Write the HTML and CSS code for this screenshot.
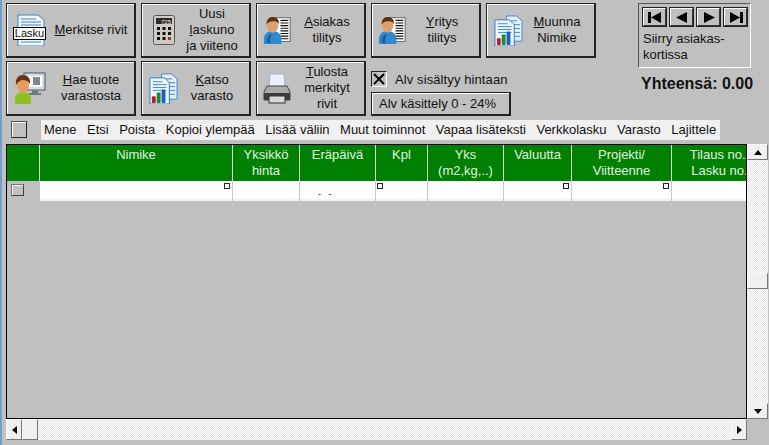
FILE: index.html
```html
<!DOCTYPE html>
<html lang="en">

<head>
    <meta charset="UTF-8">
    <meta name="viewport" content="width=device-width, initial-scale=1.0">
    <title>Lasku</title>
    <link rel="stylesheet" href="styles.css">
</head>

<body>
    <svg class="defs" width="0" height="0">
        <symbol id="sheets" viewBox="0 0 32 32">
            <path d="M14 1h10l6 5v21H14z" fill="#e4f1fc" stroke="#3f86cc"/>
            <path d="M18 6h7M18 10h10M18 14h10M18 18h10M22 22h6" stroke="#3f86cc"/>
            <path d="M2 5h15l5 5v22H2z" fill="#eef6fd" stroke="#2f78c4"/>
            <path d="M5 9h10M5 12h14M5 15h14M5 18h14" stroke="#3f86cc"/>
            <rect x="4" y="24" width="4" height="7" rx="1" fill="#c01c26"/>
            <rect x="9" y="20" width="4" height="11" rx="1" fill="#1f8a30"/>
            <rect x="14" y="17" width="4" height="14" rx="1" fill="#1f5fb0"/>
        </symbol>
        <symbol id="person-doc" viewBox="0 0 32 32">
            <rect x="12" y="2" width="19" height="27" fill="#fff" stroke="#555"/>
            <path d="M20 5h9M20 8h9M20 11h9M20 14h9M20 17h9M20 20h9M20 23h9M20 26h9" stroke="#111" stroke-width="1.200"/>
            <path d="M1 32v-6c0-6 5-9 10-9s10 3 10 9v6z" fill="#2f8ad0"/>
            <path d="M5 31c-2-5 1-10 6-11-3 3-3 7-2 11z" fill="#1c5f9c"/>
            <ellipse cx="11" cy="11" rx="6.500" ry="8" fill="#e0a06c"/>
            <path d="M4 10c0-6 3-9 7-9s8 3 7 8c-2-3-4-3-7-3s-5 1-7 4z" fill="#5c3014"/>
        </symbol>
    </svg>

    <div class="top">
        <div class="btn-grid">
            <button class="btn btn-wide">
                <span class="doc-icon">
                    <svg width="30" height="32" viewBox="0 0 30 32">
                        <path d="M1 1h20l6 5v26H1z" fill="#eef6fd" stroke="#3f86cc"/>
                        <path d="M4 5h15M4 8h20M4 11h20M4 28h20" stroke="#3f86cc"/>
                    </svg>
                    <span class="doc-label">Lasku</span>
                </span>
                <span class="btn-text"><u>M</u>erkitse rivit</span>
            </button>
            <button class="btn">
                <svg class="calc-icon" width="22" height="30" viewBox="0 0 22 30">
                    <rect x="0.500" y="0.500" width="21" height="29" rx="2" fill="#cfcbc2" stroke="#555"/>
                    <rect x="3" y="3" width="16" height="6" fill="#2c2c2c"/>
                    <text x="18" y="8.500" class="calc-num">725</text>
                    <path d="M4 12h3v3H4zM9.500 12h3v3h-3zM15 12h3v3h-3zM4 17h3v3H4zM9.500 17h3v3h-3zM15 17h3v3h-3zM4 22h3v3H4zM9.500 22h3v3h-3z" fill="#111"/>
                    <path d="M15 22h3v3h-3z" fill="#b03030"/>
                </svg>
                <span class="btn-text">Uusi<br><u>l</u>askuno<br>ja viiteno</span>
            </button>
            <button class="btn">
                <svg class="icon" width="28" height="28"><use href="#person-doc"/></svg>
                <span class="btn-text"><u>A</u>siakas<br>tilitys</span>
            </button>
            <button class="btn">
                <svg class="icon" width="28" height="28"><use href="#person-doc"/></svg>
                <span class="btn-text"><u>Y</u>ritys<br>tilitys</span>
            </button>
            <button class="btn">
                <svg class="icon" width="31" height="31"><use href="#sheets"/></svg>
                <span class="btn-text"><u>M</u>uunna<br>Nimike</span>
            </button>
            <button class="btn btn-wide">
                <svg class="icon" width="34" height="32" viewBox="0 0 32 32">
                    <rect x="10" y="1" width="21" height="17" fill="#d4dde2" stroke="#556"/>
                    <rect x="13" y="4" width="15" height="11" fill="#fff"/>
                    <path d="M19 6h7M19 8h7M19 10h7M19 12h7" stroke="#111"/>
                    <path d="M18 18h6v3h3v2H15v-2h3z" fill="#6a7a80"/>
                    <path d="M1 32v-5c0-5 4-7 8-7s8 2 8 7v5z" fill="#8cc21c"/>
                    <ellipse cx="9" cy="13" rx="6" ry="7.500" fill="#e89c5c"/>
                    <path d="M2 13c-1-7 3-10 7-10s8 3 7 9c-2-3-4-4-7-4s-5 2-7 5z" fill="#6a3410"/>
                </svg>
                <span class="btn-text"><u>H</u>ae tuote<br>varastosta</span>
            </button>
            <button class="btn">
                <svg class="icon" width="31" height="31"><use href="#sheets"/></svg>
                <span class="btn-text"><u>K</u>atso<br>varasto</span>
            </button>
            <button class="btn">
                <svg class="icon" width="28" height="31" viewBox="0 0 28 31">
                    <path d="M7 1h14l1 14H6z" fill="#eaf1fc" stroke="#a8b4c4"/>
                    <path d="M4 13h20l3 6v8H1v-8z" fill="#a8aaac" stroke="#444"/>
                    <rect x="1" y="20" width="26" height="7" fill="#3c3c3e"/>
                    <rect x="6" y="23" width="16" height="7" fill="#d8d8d8" stroke="#333"/>
                </svg>
                <span class="btn-text"><u>T</u>ulosta<br>merkityt<br>rivit</span>
            </button>
            <div class="alv">
                <label class="alv-check">
                    <span class="checkbox">
                        <svg width="12" height="12" viewBox="0 0 12 12"><path d="M1 1l10 10M11 1L1 11" stroke="#000" stroke-width="2"/></svg>
                    </span>
                    Alv sisältyy hintaan
                </label>
                <button class="alv-btn">Alv käsittely 0 - 24%</button>
            </div>
        </div>

        <div class="side">
            <div class="nav-panel">
                <div class="nav-btns">
                    <button class="nav-btn"><svg width="14" height="11" viewBox="0 0 14 11"><path d="M0 0h3v11H0zM13 0v11L3 5.500z"/></svg></button>
                    <button class="nav-btn"><svg width="12" height="11" viewBox="0 0 12 11"><path d="M11 0v11L0 5.500z"/></svg></button>
                    <button class="nav-btn"><svg width="12" height="11" viewBox="0 0 12 11"><path d="M1 0v11l11-5.500z"/></svg></button>
                    <button class="nav-btn"><svg width="14" height="11" viewBox="0 0 14 11"><path d="M11 0h3v11h-3zM1 0v11l10-5.500z"/></svg></button>
                </div>
                <p class="nav-text">Siirry asiakas-<br>kortissa</p>
            </div>
            <p class="total">Yhteensä: 0.00</p>
        </div>
    </div>

    <div class="menu-row">
        <button class="select-all"></button>
        <div class="menu">
            <span>Mene</span>
            <span>Etsi</span>
            <span>Poista</span>
            <span>Kopioi ylempää</span>
            <span>Lisää väliin</span>
            <span>Muut toiminnot</span>
            <span>Vapaa lisäteksti</span>
            <span>Verkkolasku</span>
            <span>Varasto</span>
            <span>Lajittele</span>
        </div>
    </div>

    <div class="sheet">
        <div class="sheet-main">
            <div class="grid">
                <div class="grid-cols grid-head">
                    <div></div>
                    <div>Nimike</div>
                    <div>Yksikkö<br>hinta</div>
                    <div>Eräpäivä</div>
                    <div>Kpl</div>
                    <div>Yks<br>(m2,kg,..)</div>
                    <div>Valuutta</div>
                    <div>Projekti/<br>Viitteenne</div>
                    <div>Tilaus no./<br>Lasku no.</div>
                </div>
                <div class="grid-cols grid-row">
                    <div class="row-head"><span class="row-btn"></span></div>
                    <div class="cell"><i class="handle handle-right"></i></div>
                    <div class="cell"></div>
                    <div class="cell cell-date">-&nbsp;&nbsp;&nbsp;-</div>
                    <div class="cell"><i class="handle handle-left"></i></div>
                    <div class="cell"></div>
                    <div class="cell"><i class="handle handle-right"></i></div>
                    <div class="cell"><i class="handle handle-right"></i></div>
                    <div class="cell"></div>
                </div>
            </div>
            <div class="hscroll">
                <button class="sb-btn"><svg width="5" height="8" viewBox="0 0 5 8"><path d="M5 0v8L0 4z"/></svg></button>
                <button class="sb-btn"></button>
                <div class="sb-fill"></div>
                <button class="sb-btn"><svg width="5" height="8" viewBox="0 0 5 8"><path d="M0 0v8l5-4z"/></svg></button>
            </div>
        </div>
        <div class="vscroll">
            <button class="sb-btn sb-v"><svg width="8" height="5" viewBox="0 0 8 5"><path d="M0 5h8L4 0z"/></svg></button>
            <div class="sb-gap"></div>
            <button class="sb-btn sb-v"></button>
            <div class="sb-fill"></div>
            <button class="sb-btn sb-v"><svg width="8" height="5" viewBox="0 0 8 5"><path d="M0 0h8L4 5z"/></svg></button>
        </div>
    </div>
</body>

</html>
```

FILE: styles.css
```css
* {
    margin: 0;
    padding: 0;
    box-sizing: border-box;
}

body {
    width: 769px;
    height: 445px;
    overflow: hidden;
    background-color: #c0c0c0;
    border-left: 2px solid #6f9fca;
    font-family: "Liberation Sans", Arial, sans-serif;
    font-size: 13px;
    color: #111;
}

.defs {
    display: block;
    height: 0;
}

button {
    font-family: inherit;
    font-size: inherit;
    color: inherit;
    background-color: #c0c0c0;
}

.top {
    display: flex;
    padding: 3px 0 0 4px;
    height: 118px;
}

.btn-grid {
    display: grid;
    grid-template-columns: 130px repeat(4, 110px);
    grid-template-rows: 55px 55px;
    gap: 3px 5px;
}

.btn {
    display: grid;
    grid-template-columns: 33px 1fr;
    align-items: center;
    border: 1px solid #222;
    border-right-width: 2px;
    border-bottom-width: 2px;
    box-shadow: inset 1px 1px 0 #fff;
}

.btn-wide {
    grid-template-columns: 41px 1fr;
}

.btn-text {
    text-align: center;
    line-height: 16px;
    white-space: nowrap;
}

.icon {
    display: block;
    margin-left: 6px;
}

.calc-icon {
    display: block;
    margin-left: 11px;
}

.doc-icon {
    display: block;
    position: relative;
    width: 34px;
    height: 32px;
    margin-left: 6px;
}

.doc-icon svg {
    display: block;
    margin-left: 4px;
}

.doc-label {
    position: absolute;
    left: 0;
    top: 13px;
    width: 33px;
    height: 13px;
    line-height: 11px;
    text-align: center;
    background-color: #fff;
    border: 1px solid #000;
    font-size: 11px;
}

.calc-num {
    font-family: "Liberation Sans", sans-serif;
    font-size: 6px;
    fill: #eee;
    text-anchor: end;
}

.alv {
    grid-column: span 2;
    padding-top: 10px;
}

.alv-check {
    display: flex;
    align-items: center;
    gap: 8px;
    height: 16px;
    letter-spacing: 0.1px;
}

.checkbox {
    display: flex;
    align-items: center;
    justify-content: center;
    width: 16px;
    height: 16px;
    border: 1px solid #222;
    border-right-color: #fff;
    border-bottom-color: #fff;
}

.alv-btn {
    display: block;
    width: 140px;
    height: 24px;
    margin-top: 5px;
    padding-left: 7px;
    text-align: left;
    border: 1px solid #222;
    border-right-width: 2px;
    border-bottom-width: 2px;
    box-shadow: inset 1px 1px 0 #fff;
}

.side {
    margin-left: 42px;
    width: 116px;
}

.nav-panel {
    width: 113px;
    height: 65px;
    padding: 3px 0 0 3px;
    border: 1px solid #555;
    border-right-color: #fff;
    border-bottom-color: #fff;
}

.nav-btns {
    display: flex;
    gap: 2px;
}

.nav-btn {
    display: flex;
    align-items: center;
    justify-content: center;
    width: 25px;
    height: 20px;
    border: 2px solid #333;
    border-top-color: #fff;
    border-left-color: #fff;
    outline: 1px solid #222;
    outline-offset: -1px;
}

.nav-text {
    margin-top: 4px;
    margin-left: 1px;
    line-height: 16px;
}

.total {
    margin-top: 7px;
    margin-left: 3px;
    font-size: 16px;
    font-weight: bold;
    white-space: nowrap;
}

.menu-row {
    display: flex;
    align-items: center;
    gap: 14px;
    padding-left: 9px;
    height: 23px;
}

.select-all {
    width: 16px;
    height: 17px;
    border: 1px solid #555;
    border-right-color: #222;
    border-bottom-color: #222;
    box-shadow: inset 1px 1px 0 #fff;
}

.menu {
    display: flex;
    gap: 10.500px;
    align-items: center;
    width: 679px;
    height: 20px;
    padding-left: 3px;
    background-color: #f0f0f0;
    white-space: nowrap;
}

.sheet {
    display: flex;
    margin-top: 3px;
    margin-left: 4px;
    height: 296px;
}

.sheet-main {
    width: 741px;
    display: flex;
    flex-direction: column;
}

.grid {
    height: 275px;
    overflow: hidden;
    border: 1px solid #000;
    background-color: #c0c0c0;
}

.grid-cols {
    display: grid;
    grid-template-columns: 33px 193px 67px 76px 52px 76px 68px 100px 95px;
}

.grid-head {
    height: 36px;
    background-color: #008000;
    color: #e2f2e2;
    text-align: center;
    line-height: 16px;
}

.grid-head div {
    padding-top: 2px;
    border-right: 1px solid #cfe6cf;
    white-space: nowrap;
}

.grid-head div:last-child {
    border-right: none;
}

.grid-row {
    height: 20px;
    background-color: #fff;
    border-bottom: 2px solid #f4f4f4;
}

.row-head {
    background-color: #c0c0c0;
    padding: 3px 0 0 4px;
}

.row-btn {
    display: block;
    width: 13px;
    height: 12px;
    border: 1px solid #777;
    border-right-color: #444;
    border-bottom-color: #444;
    box-shadow: inset 1px 1px 0 #eee;
}

.cell {
    position: relative;
    border-right: 1px solid #c8c8c8;
}

.cell:last-child {
    border-right: none;
}

.cell-date {
    padding-left: 18px;
    font-size: 9px;
    line-height: 26px;
}

.handle {
    position: absolute;
    top: 2px;
    width: 6px;
    height: 6px;
    background-color: #fff;
    border: 1px solid #222;
}

.handle-right {
    right: 2px;
}

.handle-left {
    left: 1px;
}

.hscroll {
    display: flex;
    height: 21px;
}

.vscroll {
    display: flex;
    flex-direction: column;
    width: 21px;
    height: 275px;
}

.sb-btn {
    display: flex;
    align-items: center;
    justify-content: center;
    flex: none;
    width: 16px;
    background-color: #f0f0f0;
    border: 1px solid #f8f8f8;
    border-right-color: #777;
    border-bottom-color: #777;
}

.sb-v {
    width: 21px;
    height: 16px;
}

.sb-fill,
.sb-gap {
    flex: 1;
    background-image: conic-gradient(#fff 25%, #e4e4e4 0 50%, #fff 0 75%, #e4e4e4 0);
    background-size: 2px 2px;
}

.sb-gap {
    flex: none;
    height: 113px;
}
```
